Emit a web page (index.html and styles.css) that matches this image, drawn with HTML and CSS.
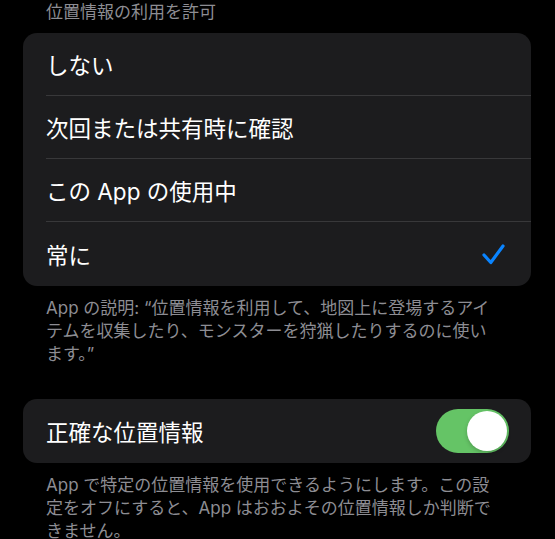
FILE: index.html
```html
<!DOCTYPE html>
<html lang="ja">
<head>
    <meta charset="UTF-8">
    <meta name="viewport" content="width=device-width, initial-scale=1.0">
    <title>位置情報</title>
    <link rel="stylesheet" href="styles.css">
</head>
<body>
    <div class="page">
        <div class="section-header">位置情報の利用を許可</div>

        <div class="group">
            <div class="row"><div class="row-inner">しない</div></div>
            <div class="row"><div class="row-inner">次回または共有時に確認</div></div>
            <div class="row"><div class="row-inner">この App の使用中</div></div>
            <div class="row row-last">
                <div class="row-inner">
                    <span>常に</span>
                    <svg class="check" width="23" height="21" viewBox="0 0 23 21">
                        <path d="M2 11 L8.8 18.5 L21 2" fill="none" stroke="#0a84ff" stroke-width="3.2" stroke-linecap="round" stroke-linejoin="round"/>
                    </svg>
                </div>
            </div>
        </div>

        <div class="section-footer">
            App の説明: “位置情報を利用して、地図上に登場するアイ<br>
            テムを収集したり、モンスターを狩猟したりするのに使い<br>
            ます。”
        </div>

        <div class="group group-second">
            <div class="row row-last">
                <div class="row-inner">
                    <span>正確な位置情報</span>
                    <div class="toggle on"><div class="knob"></div></div>
                </div>
            </div>
        </div>

        <div class="section-footer">
            App で特定の位置情報を使用できるようにします。この設<br>
            定をオフにすると、App はおおよその位置情報しか判断で<br>
            きません。
        </div>
    </div>
</body>
</html>
```

FILE: styles.css
```css
body {
    margin: 0;
    background-color: #000;
    color: #fff;
    font-family: 'Inter', 'Noto Sans CJK JP', sans-serif;
}

.page {
    padding: 1px 24px 0 23px;
}

.section-header {
    padding-left: 23px;
    font-size: 17px;
    line-height: 22px;
    color: #8d8d93;
    margin-bottom: 10px;
}

.group {
    background-color: #1c1c1e;
    border-radius: 14px;
    overflow: hidden;
}

.group-second {
    margin-top: 33px;
}

.row {
    padding-left: 23px;
    height: 63px;
}

.row-inner {
    height: 100%;
    display: flex;
    align-items: center;
    justify-content: space-between;
    border-bottom: 1px solid #38383a;
    box-sizing: border-box;
    font-size: 22.5px;
    padding-right: 22px;
}

.row-last {
    height: 64px;
}

.row-last .row-inner {
    border-bottom: none;
}

.check {
    margin-right: 4px;
}

.section-footer {
    margin-top: 11px;
    padding-left: 23px;
    font-size: 17px;
    line-height: 23px;
    color: #8d8d93;
    white-space: nowrap;
}

.toggle {
    width: 73px;
    height: 44px;
    border-radius: 22px;
    background-color: #65c466;
    display: flex;
    align-items: center;
    justify-content: flex-end;
    padding: 0 2px;
    box-sizing: border-box;
}

.knob {
    width: 40px;
    height: 40px;
    border-radius: 50%;
    background-color: #fff;
    box-shadow: 0 2px 4px rgba(0, 0, 0, 0.2);
}
```
